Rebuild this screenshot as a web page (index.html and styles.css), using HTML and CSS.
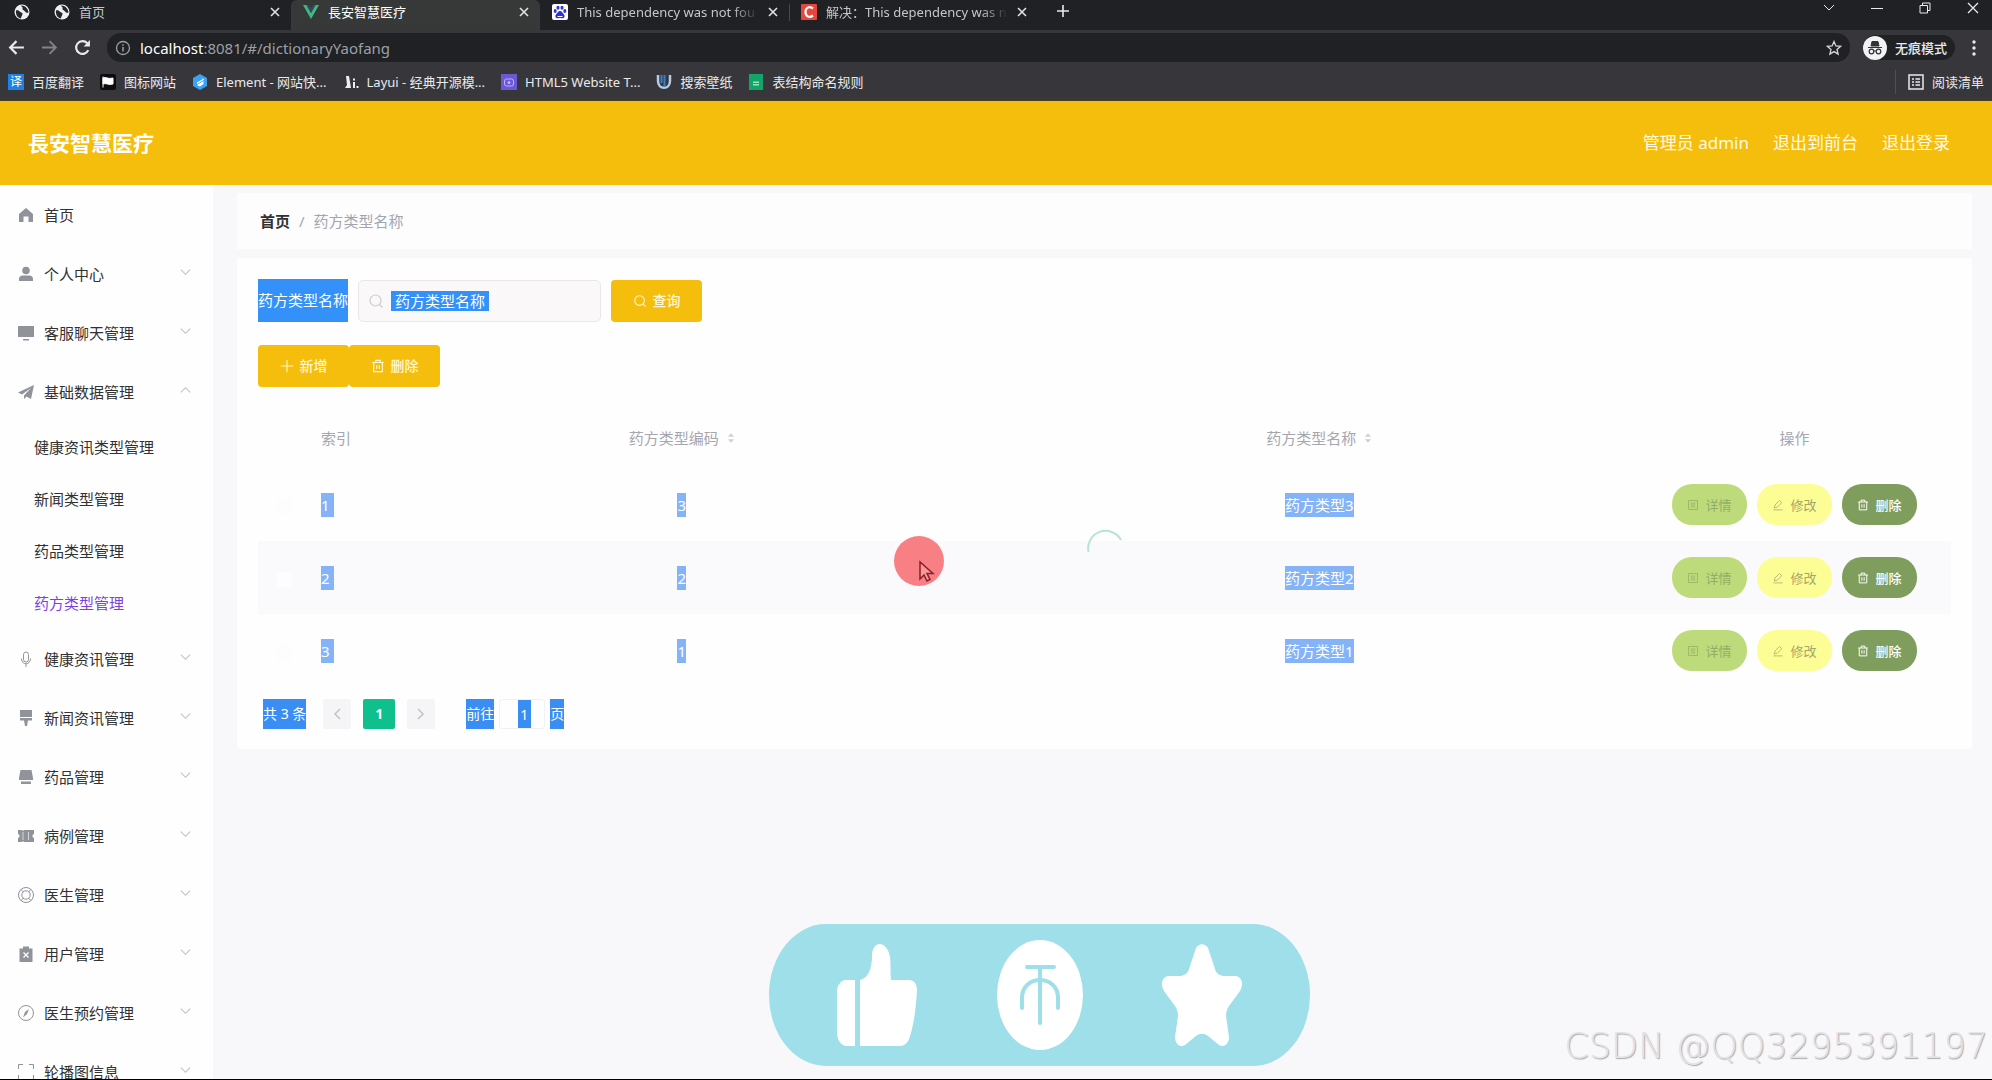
FILE: index.html
```html
<!DOCTYPE html>
<html lang="zh-CN">
<head>
<meta charset="utf-8">
<title>長安智慧医疗</title>
<link rel="stylesheet" href="styles.css">
</head>
<body>
<svg class="defs" aria-hidden="true">
  <symbol id="globe" viewBox="0 0 16 16"><circle cx="8" cy="8" r="7.500" fill="#eef0f2"/><path d="M2 6.500c2-.5 3 .2 4 1.300 1 1 2.500.7 2.500 2.200S7 12 7 14.500C4 14 1.500 11.500 2 6.500zM7 1.500c.5 1.500 2 1.500 1.500 3C8 6 10 6 11 7.500s2.500 1.500 3.500 1c-.2-3.500-3-7-7.500-7z" fill="#26272b"/></symbol>
  <symbol id="x" viewBox="0 0 10 10"><path d="M1 1l8 8M9 1l-8 8" stroke="currentColor" stroke-width="1.600" fill="none"/></symbol>
  <symbol id="down" viewBox="0 0 12 8"><path d="M1 1.500l5 5 5-5" stroke="currentColor" fill="none" stroke-width="1.200"/></symbol>
  <symbol id="search" viewBox="0 0 16 16"><circle cx="7.500" cy="7.500" r="5.500" stroke="currentColor" fill="none" stroke-width="1.200"/><path d="M11.500 11.500l3 3" stroke="currentColor" stroke-width="1.200"/></symbol>
  <symbol id="trash" viewBox="0 0 16 16"><path d="M1.500 4h13M5.500 4V1.500h5V4M3 4v10.500h10V4M6.500 7v4.500M9.500 7v4.500" stroke="currentColor" fill="none" stroke-width="1.300"/></symbol>
  <symbol id="edit" viewBox="0 0 16 16"><path d="M3 12l1-4 6-6 3 3-6 6zM2 14.500h12" stroke="currentColor" fill="none"/></symbol>
  <symbol id="list" viewBox="0 0 16 16"><path d="M2 2h12v12H2zM5 5.500h6M5 8h6M5 10.500h6" stroke="currentColor" fill="none"/></symbol>
  <symbol id="sort" viewBox="0 0 10 14"><path d="M5 1l4 4.500H1zM5 13l4-4.500H1z" fill="currentColor"/></symbol>
</svg>

<header class="browser">
  <div class="tabs">
    <div class="tab pinned"><svg class="i16"><use href="#globe"/></svg></div>
    <div class="tab"><svg class="i16"><use href="#globe"/></svg><span class="title">首页</span><svg class="close"><use href="#x"/></svg></div>
    <div class="tab active"><svg class="i16" viewBox="0 0 16 16"><path d="M0 1h3.500L8 9l4.500-8H16L8 15z" fill="#41b883"/><path d="M3.500 1H6l2 3.500L10 1h2.500L8 9z" fill="#35495e"/></svg><span class="title">長安智慧医疗</span><svg class="close"><use href="#x"/></svg></div>
    <div class="tab"><svg class="i16" viewBox="0 0 16 16"><rect width="16" height="16" rx="2" fill="#fff"/><g fill="#2d32d0"><ellipse cx="3.200" cy="7" rx="1.500" ry="2"/><ellipse cx="6" cy="3.800" rx="1.500" ry="2"/><ellipse cx="10" cy="3.800" rx="1.500" ry="2"/><ellipse cx="12.800" cy="7" rx="1.500" ry="2"/><path d="M8 7c2 0 2.500 2 4 3.500 1.500 2 0 4-2 3.700-1.500-.3-2.500-.3-4 0-2 .3-3.500-1.700-2-3.700C5.500 9 6 7 8 7z"/></g><path d="M5.500 12.500h5" stroke="#fff"/></svg><span class="title fade">This dependency was not fou</span><svg class="close"><use href="#x"/></svg></div>
    <div class="tab divided"><svg class="i16" viewBox="0 0 16 16"><rect width="16" height="16" rx="1" fill="#e8463a"/><path d="M12 4.500C8 1.500 4.500 4 4.500 8s3.500 6.500 7.500 3.500" stroke="#fff" stroke-width="2.200" fill="none"/></svg><span class="title fade">解决：This dependency was n</span><svg class="close"><use href="#x"/></svg></div>
    <svg class="plus" viewBox="0 0 14 14"><path d="M7 1v12M1 7h12" stroke="currentColor" stroke-width="1.600"/></svg>
    <div class="window">
      <svg class="wi" viewBox="0 0 12 12"><path d="M1 3l5 5 5-5" stroke="currentColor" fill="none"/></svg>
      <svg class="wi" viewBox="0 0 12 12"><path d="M0 6.500h12" stroke="currentColor"/></svg>
      <svg class="wi" viewBox="0 0 12 12"><path d="M1 3.500h7.500V11H1zM3.500 3.500V1H11v7.500H8.500" stroke="currentColor" fill="none"/></svg>
      <svg class="wi" viewBox="0 0 12 12"><path d="M1 1l10 10M11 1L1 11" stroke="currentColor" fill="none" stroke-width="1.300"/></svg>
    </div>
  </div>
  <div class="toolbar">
    <svg class="nav" viewBox="0 0 16 16"><path d="M15 8H2M8 2L2 8l6 6" stroke="currentColor" fill="none" stroke-width="2"/></svg>
    <svg class="nav dim" viewBox="0 0 16 16"><path d="M1 8h13M8 2l6 6-6 6" stroke="currentColor" fill="none" stroke-width="1.800"/></svg>
    <svg class="nav" viewBox="0 0 16 16"><path d="M13.500 10.500A6 6 0 1 1 12.500 4" stroke="currentColor" fill="none" stroke-width="2"/><path d="M15 1v6H9z" fill="currentColor"/></svg>
    <div class="omnibox">
      <svg class="i16" viewBox="0 0 16 16"><circle cx="8" cy="8" r="6.500" stroke="#9aa0a6" fill="none" stroke-width="1.300"/><path d="M8 7v4.500M8 4.200v1.600" stroke="#9aa0a6" stroke-width="1.500"/></svg>
      <span class="url"><b>localhost</b>:8081/#/dictionaryYaofang</span>
      <svg class="i16" viewBox="0 0 16 16"><path d="M8 1.500l1.900 4.400 4.700.4-3.600 3.100 1.100 4.700L8 11.600l-4.100 2.500L5 9.400 1.400 6.300l4.700-.4z" stroke="#d5d7da" fill="none" stroke-width="1.300"/></svg>
    </div>
    <div class="incognito"><svg viewBox="0 0 24 24"><circle cx="12" cy="12" r="12" fill="#f1f3f4"/><path d="M5 11.500h14M8 10l1-4.500h6l1 4.500z" fill="#333" stroke="#333"/><circle cx="8.500" cy="15.500" r="2.300" fill="none" stroke="#333" stroke-width="1.200"/><circle cx="15.500" cy="15.500" r="2.300" fill="none" stroke="#333" stroke-width="1.200"/><path d="M11 15h2" stroke="#333"/></svg>无痕模式</div>
    <svg class="dots" viewBox="0 0 4 16"><g fill="#e8eaed"><circle cx="2" cy="2" r="1.700"/><circle cx="2" cy="8" r="1.700"/><circle cx="2" cy="14" r="1.700"/></g></svg>
  </div>
  <nav class="bookmarks">
    <a href="#"><span class="fav">译</span>百度翻译</a>
    <a href="#"><svg class="i16" viewBox="0 0 16 16"><rect width="16" height="16" rx="2" fill="#0c0c0e"/><path d="M3 2.500v11M3 4c3-1.500 5 1.500 10 0v6c-5 1.500-7-1.500-10 0z" fill="#fff" stroke="#fff"/></svg>图标网站</a>
    <a href="#"><svg class="i16" viewBox="0 0 16 16"><path d="M8 0l7 4v8l-7 4-7-4V4z" fill="#38a3f5"/><path d="M8 3l4.500 2.500L5 10V8.500L11 5M5 11l6.500-4v3L8 12.500z" fill="#fff"/></svg>Element - 网站快...</a>
    <a href="#"><svg class="i16" viewBox="0 0 16 16"><path d="M3 2h3l2 12H2l2-3zM10 8h2v6h-2zM13.500 12h2v2h-2zM10 4.500h2v2h-2z" fill="#eee"/></svg>Layui - 经典开源模...</a>
    <a href="#"><svg class="i16" viewBox="0 0 16 16"><rect width="16" height="16" fill="#6a58d6"/><rect x="3.500" y="5" width="9" height="7" rx="2" fill="none" stroke="#b9b4ff"/><circle cx="8" cy="8.500" r="1.500" fill="#b9b4ff"/></svg>HTML5 Website T...</a>
    <a href="#"><svg class="i16" viewBox="0 0 16 16"><path d="M2 1v6c0 9 12 9 12 0V1" stroke="#b6cbe6" stroke-width="2.500" fill="none"/><path d="M5.500 1v8M8.500 1v12" stroke="#3a7cc6" stroke-width="2"/></svg>搜索壁纸</a>
    <a href="#"><svg class="i16" viewBox="0 0 16 16"><path d="M1 0h14v16H1z" fill="#12a568"/><path d="M4.500 7h7v5h-7zM4.500 9.500h7" fill="#9ee0c0" stroke="#12a568"/></svg>表结构命名规则</a>
    <a href="#" class="reading"><svg class="i16" viewBox="0 0 16 16"><path d="M1 1h14v14H1zM4 5h2M7.500 5H12M4 8h2M7.500 8H12M4 11h2M7.500 11H12" stroke="#e8eaed" fill="none" stroke-width="1.500"/></svg>阅读清单</a>
  </nav>
</header>

<header class="top">
  <h1>長安智慧医疗</h1>
  <div class="user"><span>管理员 admin</span><a href="#">退出到前台</a><a href="#">退出登录</a></div>
</header>

<div class="body">
  <aside class="side">
    <a class="item" href="#"><svg viewBox="0 0 16 16"><path d="M8 1l7 6v8h-4.500V9.500h-5V15H1V7z"/></svg>首页</a>
    <a class="item" href="#"><svg viewBox="0 0 16 16"><circle cx="8" cy="4.500" r="3.800"/><path d="M1 15v-2c0-2 1.500-3.500 3.500-3.500h7c2 0 3.500 1.500 3.500 3.500v2z"/></svg>个人中心<svg class="arrow"><use href="#down"/></svg></a>
    <a class="item" href="#"><svg viewBox="0 0 16 16"><path d="M0 1h16v11H0zM5 14h6v1.500H5z"/></svg>客服聊天管理<svg class="arrow"><use href="#down"/></svg></a>
    <a class="item" href="#"><svg viewBox="0 0 16 16"><path d="M16 1L0 8.500l4 2L13 4l-7 7.500V15l2.500-2.500L13 15z"/></svg>基础数据管理<svg class="arrow up"><use href="#down"/></svg></a>
    <a class="sub" href="#">健康资讯类型管理</a>
    <a class="sub" href="#">新闻类型管理</a>
    <a class="sub" href="#">药品类型管理</a>
    <a class="sub current" href="#">药方类型管理</a>
    <a class="item" href="#"><svg viewBox="0 0 16 16"><path d="M5.500 3.500a2.500 2.500 0 0 1 5 0v5a2.500 2.500 0 0 1-5 0zM3.500 7.500c0 7 9 7 9 0M8 13v3" fill="none" stroke="#909399"/></svg>健康资讯管理<svg class="arrow"><use href="#down"/></svg></a>
    <a class="item" href="#"><svg viewBox="0 0 16 16"><path d="M2 0h12v7H2zM2 8h12v2.500h-4L9 16H7l-1-5.500H2z"/></svg>新闻资讯管理<svg class="arrow"><use href="#down"/></svg></a>
    <a class="item" href="#"><svg viewBox="0 0 16 16"><path d="M2.500 1h11l1.500 8v2H1V9zM3 12.500h10V15H3z"/></svg>药品管理<svg class="arrow"><use href="#down"/></svg></a>
    <a class="item" href="#"><svg viewBox="0 0 16 16"><path d="M0 2h4l1 1 1-1h10v4c-2 0-2 4 0 4v4H6l-1-1-1 1H0v-4c2 0 2-4 0-4z"/><path d="M5 4v8M10.500 4v8" stroke="#d5d6da"/></svg>病例管理<svg class="arrow"><use href="#down"/></svg></a>
    <a class="item" href="#"><svg viewBox="0 0 16 16"><g fill="none" stroke="#909399"><circle cx="8" cy="8" r="7.500"/><circle cx="8" cy="8" r="4.200"/><path d="M3 2.500L5.500 5M13 2.500L10.500 5M3 13.500L5.500 11M13 13.500L10.500 11"/></g></svg>医生管理<svg class="arrow"><use href="#down"/></svg></a>
    <a class="item" href="#"><svg viewBox="0 0 16 16"><path d="M1.500 2.500H5V.5h6v2h3.500V16h-13z"/><path d="M5.500 6.500l5 5M10.500 6.500l-5 5" stroke="#fff" stroke-width="1.300"/></svg>用户管理<svg class="arrow"><use href="#down"/></svg></a>
    <a class="item" href="#"><svg viewBox="0 0 16 16"><circle cx="8" cy="8" r="7.500" fill="none" stroke="#909399"/><path d="M11 4L9 9l-4 3.500L7 7z"/></svg>医生预约管理<svg class="arrow"><use href="#down"/></svg></a>
    <a class="item" href="#"><svg viewBox="0 0 16 16"><path d="M.5 5V.5H5M11 .5h4.500V5M.5 11v4.500H5M11 15.500h4.500V11" fill="none" stroke="#909399"/></svg>轮播图信息<svg class="arrow"><use href="#down"/></svg></a>
  </aside>

  <main>
    <nav class="crumbs"><a href="#">首页</a><span>/</span><span>药方类型名称</span></nav>
    <section class="card">
      <form class="search">
        <label for="q">药方类型名称</label>
        <div class="field"><svg class="i16"><use href="#search"/></svg><input id="q" type="text" placeholder="药方类型名称"></div>
        <button type="button" class="btn"><svg><use href="#search"/></svg>查询</button>
      </form>
      <div class="actions">
        <button type="button" class="btn"><svg viewBox="0 0 16 16"><path d="M8 1v14M1 8h14" stroke="currentColor" stroke-width="1.200"/></svg>新增</button><button type="button" class="btn"><svg><use href="#trash"/></svg>删除</button>
      </div>
      <table>
        <colgroup><col class="c-check"><col class="c-index"><col><col><col class="c-ops"></colgroup>
        <thead><tr><th></th><th class="left">索引</th><th>药方类型编码<svg class="sort"><use href="#sort"/></svg></th><th>药方类型名称<svg class="sort"><use href="#sort"/></svg></th><th>操作</th></tr></thead>
        <tbody>
          <tr><td><input type="checkbox" aria-label="选择"></td><td class="left"><mark class="num">1</mark></td><td><mark>3</mark></td><td><mark>药方类型3</mark></td><td><div class="ops"><button class="view"><svg><use href="#list"/></svg>详情</button><button class="edit"><svg><use href="#edit"/></svg>修改</button><button class="del"><svg><use href="#trash"/></svg>删除</button></div></td></tr>
          <tr class="hover"><td><input type="checkbox" aria-label="选择"></td><td class="left"><mark class="num">2</mark></td><td><mark>2</mark></td><td><mark>药方类型2</mark></td><td><div class="ops"><button class="view"><svg><use href="#list"/></svg>详情</button><button class="edit"><svg><use href="#edit"/></svg>修改</button><button class="del"><svg><use href="#trash"/></svg>删除</button></div></td></tr>
          <tr><td><input type="checkbox" aria-label="选择"></td><td class="left"><mark class="num">3</mark></td><td><mark>1</mark></td><td><mark>药方类型1</mark></td><td><div class="ops"><button class="view"><svg><use href="#list"/></svg>详情</button><button class="edit"><svg><use href="#edit"/></svg>修改</button><button class="del"><svg><use href="#trash"/></svg>删除</button></div></td></tr>
        </tbody>
      </table>
      <div class="pager">
        <span class="sel">共 3 条</span>
        <button class="pg prev" aria-label="上一页"><svg viewBox="0 0 8 12"><path d="M7 1L2 6l5 5" stroke="currentColor" fill="none" stroke-width="1.500"/></svg></button>
        <button class="pg on">1</button>
        <button class="pg" aria-label="下一页"><svg viewBox="0 0 8 12"><path d="M1 1l5 5-5 5" stroke="currentColor" fill="none" stroke-width="1.500"/></svg></button>
        <label class="sel jump" for="page">前往</label>
        <div class="pagebox"><input id="page" type="text" value="1"></div>
        <span class="sel">页</span>
      </div>
      <svg class="spinner" viewBox="0 0 36 36"><path d="M1.500 24A17.500 17.500 0 0 1 34 12" stroke="#b5e5d5" stroke-width="2" fill="none"/></svg>
    </section>
  </main>
</div>

<svg class="pointer" viewBox="0 0 50 50"><circle cx="25" cy="25" r="25" fill="#f87f83"/><path d="M26 26v17l4-4 3 6 3-1.500-3-6h6z" fill="#f59a9a" stroke="#8c1f2a" stroke-width="1.500"/></svg>

<div class="dock">
  <svg class="thumb" viewBox="0 0 80 102"><path d="M8 36h10v66H8c-5-2-8-7-8-14V48c0-6 3-11 8-12zM23 36c8-2 12-11 12-24C35-4 50-4 53 13c1 7 0 15 1 23h18c5 0 8 4 8 10-1 18-3 32-6 43-2 8-5 13-11 13H23z" fill="#fff"/></svg>
  <svg class="coin" viewBox="0 0 86 110"><ellipse cx="43" cy="55" rx="43" ry="55" fill="#fff"/><path d="M30 27h27M43 27v56M25 68V58c0-24 36-24 36 0v10" stroke="#9fdfea" stroke-width="4" stroke-linecap="round" fill="none"/></svg>
  <svg class="fav-star" viewBox="0 0 80 102"><path d="M34 4c3-5 9-5 12 0l7 21c1 4 4 6 8 7h13c6 1 8 8 4 15L67 62c-2 3-3 6-3 10l3 21c0 7-5 11-10 8l-11-9c-4-3-8-3-12 0l-11 9c-5 3-10-1-10-8l3-21c0-4-1-7-3-10L2 47c-4-7-2-14 4-15h13c4-1 7-3 8-7z" fill="#fff"/></svg>
</div>
<div class="watermark">CSDN @QQ3295391197</div>
</body>
</html>
```

FILE: styles.css
```css
* { box-sizing: border-box; }
body {
  margin: 0;
  height: 100vh;
  overflow: hidden;
  position: relative;
  display: flex;
  flex-direction: column;
  border-bottom: 1px solid #000;
  background: #f8f8fb;
  font: 15px/24px "Noto Sans", "Noto Sans CJK SC", sans-serif;
  color: #303133;
}
a { color: inherit; text-decoration: none; }
button, input { font: inherit; border: 0; padding: 0; margin: 0; }
svg { flex: none; display: block; }
.defs { position: absolute; width: 0; height: 0; }
.i16 { width: 16px; height: 16px; }

/* Browser frame */
.browser { flex: none; height: 101px; background: #37373b; color: #e8eaed; font-size: 13px; border-bottom: 1px solid #4a3c1c; }
.tabs { display: flex; height: 30px; background: #202124; }
.tab { display: flex; align-items: center; gap: 9px; width: 249px; height: 30px; padding: 0 11px 7px 12px; border-radius: 6px 6px 0 0; color: #c4c7cb; }
.tab.pinned { width: 42px; padding-left: 14px; }
.tab.active { background: #373938; color: #fff; }
.tab.divided { background: linear-gradient(#47484c, #47484c) 0 3px / 1px 18px no-repeat; }
.title { flex: 1; overflow: hidden; white-space: nowrap; }
.fade { -webkit-mask-image: linear-gradient(90deg, #000 85%, transparent); mask-image: linear-gradient(90deg, #000 85%, transparent); }
.close { width: 10px; height: 10px; color: #e0e2e5; }
.plus { width: 14px; height: 14px; margin: 4px 0 0 18px; }
.window { display: flex; gap: 36px; margin: 2px 13px 0 auto; }
.wi { width: 12px; height: 12px; }
.toolbar { display: flex; align-items: center; height: 35px; padding: 0 16px 0 8px; }
.nav { width: 17px; height: 17px; margin-right: 16px; }
.nav.dim { color: #808388; }
.omnibox { flex: 1; display: flex; align-items: center; height: 29px; gap: 9px; padding: 0 8px; border-radius: 14px; background: #202124; }
.url { flex: 1; font-size: 15px; color: #9aa0a6; }
.url b { font-weight: 400; color: #fff; }
.incognito { display: flex; align-items: center; gap: 8px; height: 25px; margin: 0 17px 0 13px; padding-right: 8px; border-radius: 13px; background: #202124; font-weight: 500; }
.incognito svg { width: 24px; height: 24px; }
.dots { width: 4px; height: 16px; }
.bookmarks { display: flex; align-items: center; gap: 16px; height: 33px; padding: 0 8px; }
.bookmarks a { display: flex; align-items: center; gap: 8px; white-space: nowrap; }
.fav { width: 16px; height: 16px; line-height: 16px; font-size: 12px; text-align: center; background: #1b83e8; color: #fff; }
.bookmarks .reading { margin-left: auto; padding-left: 12px; border-left: 1px solid #505155; }

/* Application header */
.top { flex: none; display: flex; align-items: center; justify-content: space-between; height: 84px; padding: 0 42px 0 28px; background: #f6be0c; color: #fff; }
.top h1 { margin: 0; font-size: 21px; font-weight: 700; }
.user { display: flex; gap: 24px; font-size: 17px; color: #fffbe6; }

.body { flex: 1; display: flex; min-height: 0; }
.side { flex: none; width: 213px; overflow: hidden; background: #fefefe; }
.side a { display: flex; align-items: center; }
.item { height: 59px; gap: 10px; padding: 0 22px 0 18px; }
.item svg { width: 16px; height: 16px; fill: #909399; }
.item .arrow { width: 11px; height: 8px; margin: 0 0 4px auto; color: #c0c2c7; }
.item .up { transform: rotate(180deg); }
.sub { height: 52px; padding-left: 34px; }
.current { color: #7d3fe0; }

main { flex: 1; min-width: 0; padding: 8px 20px 0 24px; }
.crumbs { display: flex; align-items: center; gap: 9px; height: 56px; padding-left: 23px; background: #fdfdfe; color: #a3a5ad; }
.crumbs a { font-weight: 700; color: #303133; }
.card { position: relative; margin-top: 9px; padding: 21px 21px 20px; background: #fefefe; border-radius: 4px; }
.search { display: flex; align-items: center; }
.search label { height: 43px; line-height: 43px; background: #3491fa; color: #fff; }
.field { display: flex; align-items: center; gap: 7px; width: 243px; height: 42px; margin: 0 10px; padding: 0 9px; border: 1px solid #ebe6ea; border-radius: 5px; background: #fbf8fa; color: #cfcbd0; }
.field input { width: 98px; height: 20px; padding: 0 4px; background: #3491fa; }
.field input::placeholder { color: #fff; opacity: 1; }
.btn { display: flex; align-items: center; justify-content: center; gap: 6px; width: 91px; height: 42px; border-radius: 4px; background: #f6be0c; color: #fff7d6; font-size: 14px; font-weight: 500; }
.btn svg { width: 14px; height: 14px; }
.actions { display: flex; margin: 23px 0 21px; }

table { width: 100%; table-layout: fixed; border-collapse: collapse; }
.c-check { width: 53px; }
.c-index { width: 52px; }
.c-ops { width: 313px; }
th, td { padding: 0; text-align: center; vertical-align: middle; }
th { height: 60px; color: #a5a6ae; font-weight: 400; white-space: nowrap; }
td { height: 73px; }
.left { text-align: left; padding-left: 10px; }
.sort { display: inline-block; width: 8px; height: 12px; margin-left: 8px; color: #cfd1d8; }
.hover { background: #faf9fb; }
mark { display: inline-block; background: #84b3f8; color: #fff; }
.num { width: 13px; }
td input { appearance: none; width: 15px; height: 15px; vertical-align: middle; border: 1px solid #fcfcfd; border-radius: 2px; background: #fdfdfe; }
.ops { display: flex; justify-content: center; gap: 10px; }
.ops button { display: flex; align-items: center; justify-content: center; gap: 6px; width: 75px; height: 41px; border-radius: 20px; font-size: 13px; }
.ops svg { width: 12px; height: 12px; }
.view { background: #bedb7b; color: #94ad66; }
.edit { background: #fdfd96; color: #a5a56a; }
.del { background: #7f9e5d; color: #fff; font-weight: 500; }

.pager { display: flex; align-items: center; margin: 12px 0 0 5px; font-size: 14px; }
.sel { height: 30px; line-height: 30px; background: #3a8ef3; color: #fff; }
.pg { display: flex; align-items: center; justify-content: center; width: 28px; height: 30px; border-radius: 2px; background: #f5f5f7; color: #c0c3ca; }
.pg svg { width: 8px; height: 12px; }
.prev { margin-left: 17px; }
.pg.on { width: 32px; margin: 0 12px; background: #10c08c; color: #fff; font-weight: 700; }
.jump { margin-left: 31px; }
.pagebox { display: flex; justify-content: center; align-items: center; width: 46px; height: 30px; margin: 0 5px; padding-left: 4px; border: 1px solid #f1f0f3; border-radius: 3px; }
.pagebox input { width: 13px; height: 28px; background: #3a8ef3; color: #fff; text-align: center; }

/* Overlays */
.spinner { position: absolute; left: 50%; top: 270px; width: 36px; height: 36px; margin-left: -18px; }
.pointer { position: absolute; left: 894px; top: 536px; width: 50px; height: 50px; }
.dock { position: absolute; left: calc(50% - 227px); bottom: 13px; display: flex; align-items: center; justify-content: space-between; width: 541px; height: 142px; padding: 0 68px; border-radius: 57px / 71px; background: #9fdfea; }
.thumb, .fav-star { width: 80px; height: 102px; }
.coin { width: 86px; height: 110px; }
.watermark { position: absolute; right: 4px; bottom: 9px; font: 200 35px/48px "DejaVu Sans", sans-serif; color: #e4e3e8; text-shadow: 1px 1px 1px #a9a9ad; }
```
